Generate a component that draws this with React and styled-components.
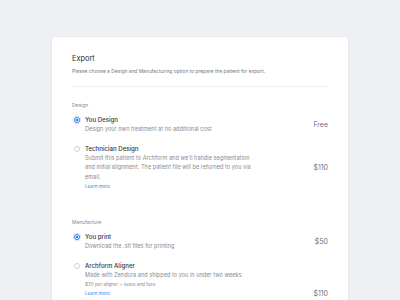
import React from 'react';
import styled, { createGlobalStyle } from 'styled-components';

const GlobalStyle = createGlobalStyle`
  html, body {
    margin: 0;
    padding: 0;
    background: #eff0f3;
    font-family: Inter, "Noto Sans", sans-serif;
    -webkit-font-smoothing: antialiased;
  }
`;

const Page = styled.div`
  width: 400px;
  height: 300px;
  overflow: hidden;
  display: flex;
  justify-content: center;
  padding-top: 37px;
  box-sizing: border-box;
`;

const Card = styled.div`
  width: 296px;
  background: #fff;
  border-radius: 3px;
  box-shadow: 0 0 0 0.5px #e4e6ea, 0 1px 3px rgba(20, 30, 50, 0.05);
  padding: 16px 20px 0;
  box-sizing: border-box;
`;

const Header = styled.div`
  padding-bottom: 11px;
  border-bottom: 1px solid #f0f1f3;
`;

const Title = styled.div`
  font-size: 7.4px;
  color: #2e3033;
  line-height: 12px;
  margin-bottom: 2px;
`;

const Subtitle = styled.div`
  font-size: 4.9px;
  color: #73777e;
  line-height: 8px;
`;

const Section = styled.div`
  padding-top: ${(p) => p.$top}px;
`;

const SectionLabel = styled.div`
  font-size: 4.9px;
  color: #85898f;
  line-height: 8px;
  margin-bottom: 6px;
`;

const Option = styled.div`
  display: flex;
  align-items: ${(p) => (p.$align === 'end' ? 'flex-end' : 'center')};
  margin-bottom: ${(p) => p.$gap || 0}px;
`;

const Radio = styled.span`
  flex: none;
  width: 6px;
  height: 6px;
  border-radius: 50%;
  box-sizing: border-box;
  margin: 1.7px 5px 0 2px;
  align-self: flex-start;
  border: ${(p) => (p.$checked ? '1.2px solid #2d7ff0' : '0.6px solid #cdd0d5')};
  background: ${(p) => (p.$checked ? 'radial-gradient(circle, #2d7ff0 0 1.4px, #fff 1.6px)' : '#fff')};
  box-shadow: ${(p) => (p.$checked ? '0 0 0 1.2px rgba(45,127,240,0.18)' : 'none')};
`;

const Body = styled.div`
  flex: 1;
`;

const OptionTitle = styled.div`
  font-size: 6.1px;
  font-weight: 500;
  color: #35373b;
  line-height: 9.5px;
`;

const Desc = styled.div`
  font-size: 5.5px;
  color: #868a91;
  line-height: 9.6px;
  letter-spacing: 0.05px;
  max-width: 175px;
`;

const Note = styled.div`
  font-size: 4.6px;
  color: #868a91;
  line-height: 8.5px;
`;

const LearnMore = styled.a`
  display: block;
  font-size: 4.6px;
  color: #2d7ff0;
  line-height: 9px;
  text-decoration: none;
`;

const Price = styled.div`
  flex: none;
  font-size: 7px;
  color: #6e7278;
  line-height: 9px;
  text-align: right;
`;

const App = () => (
  <>
    <GlobalStyle />
    <Page>
      <Card>
        <Header>
          <Title>Export</Title>
          <Subtitle>Please choose a Design and Manufacturing option to prepare the patient for export.</Subtitle>
        </Header>

        <Section $top={14}>
          <SectionLabel>Design</SectionLabel>
          <Option $gap={10}>
            <Radio $checked />
            <Body>
              <OptionTitle>You Design</OptionTitle>
              <Desc>Design your own treatment at no additional cost</Desc>
            </Body>
            <Price>Free</Price>
          </Option>
          <Option>
            <Radio />
            <Body>
              <OptionTitle>Technician Design</OptionTitle>
              <Desc>
                Submit this patient to Archform and we'll handle segmentation and initial alignment. The patient file
                will be returned to you via email.
              </Desc>
              <LearnMore>Learn more</LearnMore>
            </Body>
            <Price>$110</Price>
          </Option>
        </Section>

        <Section $top={27}>
          <SectionLabel>Manufacture</SectionLabel>
          <Option $gap={10}>
            <Radio $checked />
            <Body>
              <OptionTitle>You print</OptionTitle>
              <Desc>Download the .stl files for printing</Desc>
            </Body>
            <Price>$50</Price>
          </Option>
          <Option $align="end">
            <Radio />
            <Body>
              <OptionTitle>Archform Aligner</OptionTitle>
              <Desc>Made with Zendura and shipped to you in under two weeks</Desc>
              <Note>$20 per aligner + taxes and fees</Note>
              <LearnMore>Learn more</LearnMore>
            </Body>
            <Price>$110</Price>
          </Option>
        </Section>
      </Card>
    </Page>
  </>
);

export default App;
